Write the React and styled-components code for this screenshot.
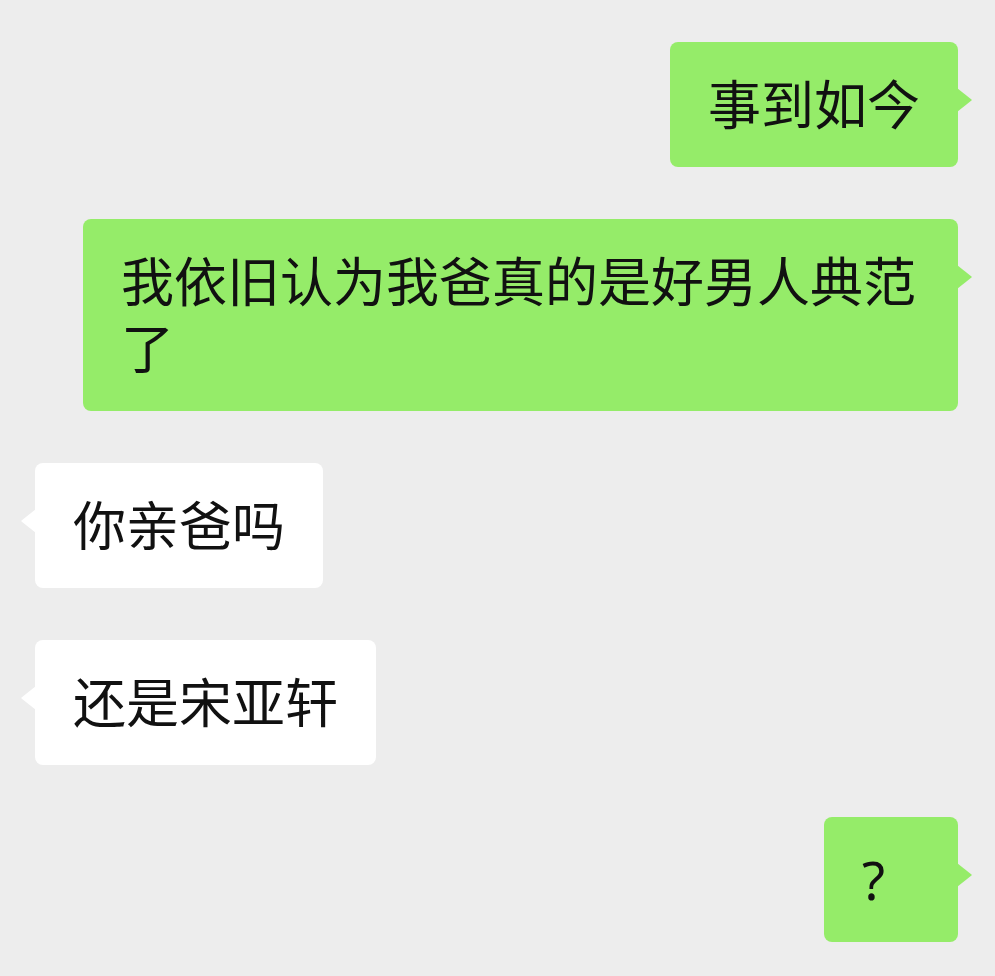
import React from 'react';
import styled, { createGlobalStyle, css } from 'styled-components';

const GlobalStyle = createGlobalStyle`
  html, body {
    margin: 0;
    padding: 0;
    background: #ededed;
  }
  * {
    box-sizing: border-box;
  }
`;

const ChatWrapper = styled.main`
  width: 995px;
  height: 976px;
  overflow: hidden;
  padding: 42px 0 0;
  display: flex;
  flex-direction: column;
  gap: 52px;
  background: #ededed;
  font-family: "Noto Sans", "Noto Sans CJK SC", sans-serif;
`;

const Row = styled.div`
  display: flex;
  justify-content: ${({ mine }) => (mine ? 'flex-end' : 'flex-start')};
  padding: ${({ mine }) => (mine ? '0 37px 0 0' : '0 0 0 35px')};
`;

const Bubble = styled.div`
  position: relative;
  max-width: 875px;
  min-width: 134px;
  padding: 29px 38px;
  border-radius: 8px;
  font-size: 53px;
  line-height: 67px;
  color: #111;
  background: ${({ mine }) => (mine ? '#95ec69' : '#ffffff')};

  &::after {
    content: '';
    position: absolute;
    top: 46px;
    width: 15px;
    height: 24px;
    background: inherit;
    ${({ mine }) =>
      mine
        ? css`
            right: -14px;
            clip-path: polygon(0 0, 88% 44%, 100% 50%, 88% 56%, 0 100%);
          `
        : css`
            left: -14px;
            clip-path: polygon(100% 0, 12% 44%, 0 50%, 12% 56%, 100% 100%);
          `}
  }
`;

const messages = [
  { mine: true, text: '事到如今' },
  { mine: true, text: '我依旧认为我爸真的是好男人典范了' },
  { mine: false, text: '你亲爸吗' },
  { mine: false, text: '还是宋亚轩' },
  { mine: true, text: '?' },
];

export default function App() {
  return (
    <>
      <GlobalStyle />
      <ChatWrapper>
        {messages.map((m, i) => (
          <Row key={i} mine={m.mine}>
            <Bubble mine={m.mine}>{m.text}</Bubble>
          </Row>
        ))}
      </ChatWrapper>
    </>
  );
}
